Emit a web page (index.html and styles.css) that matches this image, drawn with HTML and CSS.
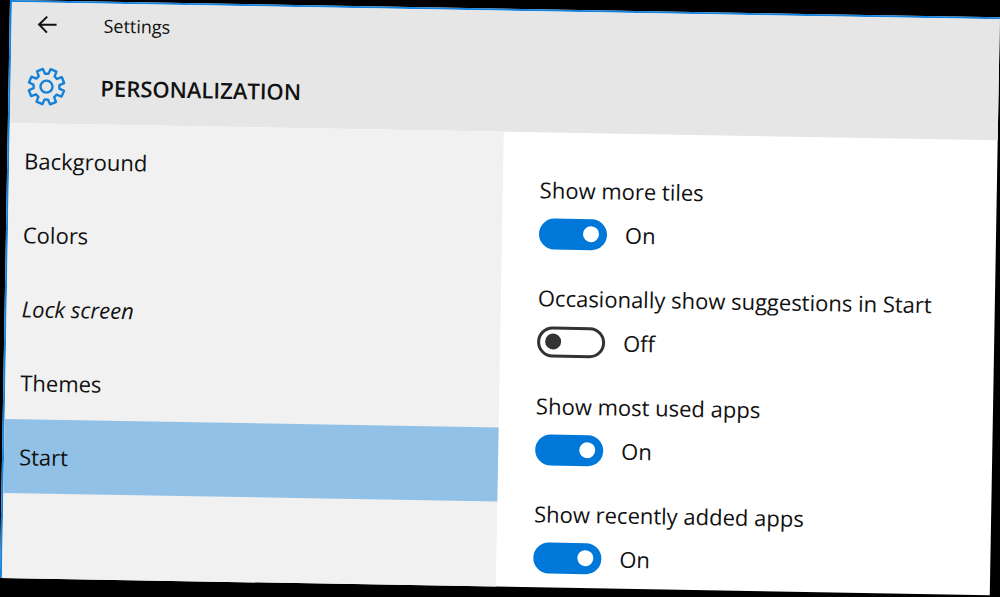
FILE: index.html
```
<!DOCTYPE html>
<html lang="en">
<head>
  <meta charset="UTF-8" />
  <title>Settings</title>
  <link rel="stylesheet" href="styles.css">
</head>
<body>

  <div class="window">
    <header class="header">
      <div class="titlebar">
        <button class="back" aria-label="Back">
          <svg width="20" height="18" viewBox="0 0 20 18"><path d="M19 9H1.5M9.5 1L1.5 9l8 8" /></svg>
        </button>
        <span class="app-name">Settings</span>
      </div>
      <div class="heading">
        <svg class="gear" width="40" height="40" viewBox="-20 -20 40 40">
          <path d="M12.9 1.7L17.6 3.9L15.2 9.7L10.3 7.9L7.9 10.3L9.7 15.2L3.9 17.6L1.7 12.9H-1.7L-3.9 17.6L-9.7 15.2L-7.9 10.3L-10.3 7.9L-15.2 9.7L-17.6 3.9L-12.9 1.7V-1.7L-17.6 -3.9L-15.2 -9.7L-10.3 -7.9L-7.9 -10.3L-9.7 -15.2L-3.9 -17.6L-1.7 -12.9H1.7L3.9 -17.6L9.7 -15.2L7.9 -10.3L10.3 -7.9L15.2 -9.7L17.6 -3.9L12.9 -1.7Z" />
          <circle r="6" />
        </svg>
        <h1>PERSONALIZATION</h1>
      </div>
    </header>

    <div class="content">
      <nav class="sidebar">
        <a href="#background">Background</a>
        <a href="#colors">Colors</a>
        <a href="#lock" class="focused">Lock screen</a>
        <a href="#themes">Themes</a>
        <a href="#start" class="active">Start</a>
      </nav>

      <main class="options">
        <div class="option">
          <label for="tiles">Show more tiles</label>
          <div class="switch">
            <input type="checkbox" id="tiles" checked>
            <span>On</span>
          </div>
        </div>
        <div class="option">
          <label for="suggestions">Occasionally show suggestions in Start</label>
          <div class="switch">
            <input type="checkbox" id="suggestions">
            <span>Off</span>
          </div>
        </div>
        <div class="option">
          <label for="most-used">Show most used apps</label>
          <div class="switch">
            <input type="checkbox" id="most-used" checked>
            <span>On</span>
          </div>
        </div>
        <div class="option">
          <label for="recent">Show recently added apps</label>
          <div class="switch">
            <input type="checkbox" id="recent" checked>
            <span>On</span>
          </div>
        </div>
      </main>
    </div>
  </div>

</body>
</html>
```
FILE: styles.css
```
* {
  box-sizing: border-box;
}
html {
  background: #000;
}
body {
  margin: 0;
  min-height: 100vh;
  padding: 0 0 0 10px;
  overflow: hidden;
  font-family: "Segoe UI", "Open Sans", sans-serif;
  font-size: 22px;
  line-height: 32px;
  color: #111;
}
/* the whole window is tilted slightly */
.window {
  display: flex;
  flex-direction: column;
  min-height: calc(100vh - 19px);
  border-top: 2px solid #1883dc;
  border-left: 2px solid #1883dc;
  background: #fff;
  transform: rotate(1deg);
  transform-origin: top left;
}
.header {
  background: #e6e6e6;
  padding: 2px 16px 16px;
}
.titlebar, .heading {
  display: flex;
  align-items: center;
}
.titlebar {
  height: 40px;
  gap: 46px;
}
.back {
  display: flex;
  border: 0;
  padding: 0;
  margin-left: 10px;
  background: none;
}
.back svg {
  fill: none;
  stroke: #111;
  stroke-width: 2;
}
.app-name {
  font-size: 18px;
}
.heading {
  height: 63px;
  padding-top: 21px;
  gap: 34px;
}
.gear {
  fill: none;
  stroke: #1580d8;
  stroke-width: 2.4;
  stroke-linejoin: round;
}
h1 {
  margin: 0;
  font-size: 22px;
  font-weight: 600;
}
.content {
  flex: 1;
  display: flex;
}
.sidebar {
  width: 50%;
  background: #f1f1f1;
}
.sidebar a {
  display: block;
  padding: 21px 15px;
  color: #111;
  text-decoration: none;
}
.sidebar .focused {
  font-style: italic;
}
.sidebar .active {
  background: #91c1e7;
}
.options {
  flex: 1;
  display: flex;
  flex-direction: column;
  gap: 32px;
  padding: 41px 0 0 37px;
}
.option label {
  display: block;
  margin-bottom: 12px;
}
.switch {
  display: flex;
  align-items: center;
  gap: 18px;
}
.switch input {
  appearance: none;
  display: flex;
  align-items: center;
  width: 68px;
  height: 31px;
  margin: 0;
  padding: 0 5px;
  border: 3px solid #333;
  border-radius: 16px;
}
.switch input::before {
  content: "";
  width: 16px;
  height: 16px;
  border-radius: 50%;
  background: #333;
}
.switch input:checked {
  justify-content: flex-end;
  border-color: #0078d9;
  background: #0078d9;
}
.switch input:checked::before {
  background: #fff;
}
```
